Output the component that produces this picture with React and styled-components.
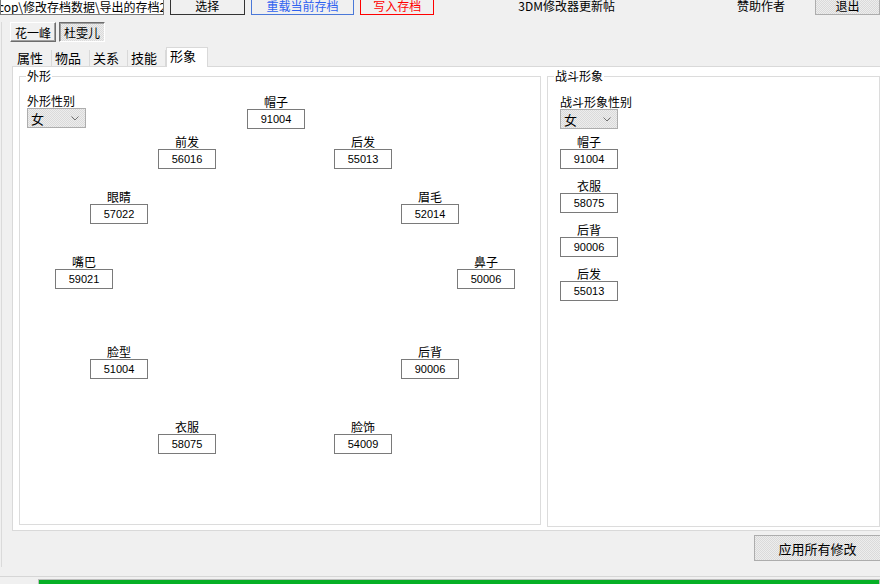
import React from 'react';
import styled, { createGlobalStyle, css } from 'styled-components';

const GlobalStyle = createGlobalStyle`
  html, body {
    margin: 0;
    padding: 0;
    background: #f0f0f0;
  }
  body {
    font-family: "Noto Sans CJK SC", "Noto Sans", sans-serif;
    font-size: 12px;
    color: #000;
  }
`;

const dither = css`
  background-color: #e4e4e4;
  background-image: repeating-conic-gradient(#dadada 0% 25%, #ededed 0% 50%);
  background-size: 2px 2px;
`;

const Window = styled.div`
  width: 880px;
  height: 584px;
  overflow: hidden;
  display: flex;
  flex-direction: column;
  background: #f0f0f0;
`;

const TopBar = styled.div`
  display: flex;
  align-items: center;
  height: 24px;
  margin-top: -9px;
  flex-shrink: 0;
`;

const PathInput = styled.div`
  box-sizing: border-box;
  width: 166px;
  height: 23px;
  border: 1px solid #7a7a7a;
  background: #fff;
  white-space: nowrap;
  overflow: hidden;
  line-height: 27px;
  font-size: 12px;
  text-indent: -3px;
`;

const TopButton = styled.div`
  box-sizing: border-box;
  width: ${p => p.$w}px;
  height: 24px;
  margin-left: ${p => p.$ml}px;
  border: 1px solid ${p => p.$border || '#333'};
  color: ${p => p.$color || '#000'};
  display: flex;
  align-items: center;
  justify-content: center;
  padding-top: 4px;
  font-size: 12px;
`;

const TopLink = styled.div`
  margin-left: ${p => p.$ml}px;
  padding-top: 4px;
  font-size: 12px;
  white-space: nowrap;
`;

const ExitButton = styled.div`
  ${dither};
  box-sizing: border-box;
  width: 66px;
  height: 24px;
  margin-left: 30px;
  border: 1px solid #adadad;
  display: flex;
  align-items: center;
  justify-content: center;
  padding-top: 4px;
`;

const Body = styled.div`
  margin-top: 7px;
  border-left: 1px solid #dadada;
  margin-left: 1px;
  height: 545px;
  display: flex;
  flex-direction: column;
  flex-shrink: 0;
`;

const CharRow = styled.div`
  display: flex;
  gap: 3px;
  padding-left: 8px;
`;

const CharButton = styled.div`
  box-sizing: border-box;
  height: 20px;
  padding: 0 4px;
  display: flex;
  align-items: center;
  font-size: 12px;
  border: 1px solid;
  ${p => p.$active
    ? css`
      ${dither};
      border-color: #6d6d6d #ffffff #ffffff #6d6d6d;
      box-shadow: inset 1px 1px 0 #a0a0a0;
    `
    : css`
      background: #f0f0f0;
      border-color: #ffffff #6d6d6d #6d6d6d #ffffff;
      box-shadow: inset -1px -1px 0 #a0a0a0;
    `}
`;

const TabStrip = styled.div`
  display: flex;
  align-items: flex-end;
  height: 19px;
  margin-top: 5px;
  padding-left: 12px;
`;

const Tab = styled.div`
  box-sizing: border-box;
  height: ${p => (p.$active ? 20 : 16)}px;
  width: ${p => p.$w}px;
  padding-left: 3px;
  font-size: 13px;
  line-height: 15px;
  margin-bottom: ${p => (p.$active ? -1 : 0)}px;
  position: relative;
  z-index: ${p => (p.$active ? 2 : 1)};
  ${p => p.$active
    ? css`
      background: #fff;
      border: 1px solid #d9d9d9;
      border-bottom: none;
    `
    : css`
      border-right: 1px solid #d9d9d9;
    `}
`;

const TabPanel = styled.div`
  box-sizing: border-box;
  margin-left: 10px;
  width: 880px;
  height: 465px;
  background: #fff;
  border: 1px solid #d9d9d9;
  padding: 9px 0 0 6px;
  display: flex;
  gap: 6px;
  align-items: flex-start;
`;

const GroupBox = styled.div`
  box-sizing: border-box;
  position: relative;
  width: ${p => p.$w}px;
  height: ${p => p.$h}px;
  border: 1px solid #dcdcdc;
  flex-shrink: 0;
`;

const Legend = styled.div`
  position: absolute;
  top: -9px;
  left: 6px;
  padding: 0 1px;
  background: #fff;
  font-size: 12px;
  line-height: 16px;
`;

const GenderLabel = styled.div`
  font-size: 12px;
  line-height: 14px;
  white-space: nowrap;
`;

const Select = styled.div`
  ${dither};
  box-sizing: border-box;
  width: ${p => p.$w}px;
  height: 20px;
  border: 1px solid #adadad;
  display: flex;
  align-items: center;
  justify-content: space-between;
  padding: 0 6px 0 3px;
  font-size: 13px;
`;

const LeftContent = styled.div`
  padding: 17px 0 0 7px;
`;

const RightContent = styled.div`
  padding: 18px 0 0 12px;
  display: flex;
  flex-direction: column;
  align-items: flex-start;
`;

const FieldList = styled.div`
  display: flex;
  flex-direction: column;
  gap: 10px;
  margin-top: 6px;
`;

const Field = styled.div`
  display: flex;
  flex-direction: column;
  align-items: center;
  width: 58px;
  ${p => p.$free && css`
    position: absolute;
    left: ${p.$x - 20}px;
    top: ${p.$y - 91}px;
  `}
`;

const FieldLabel = styled.div`
  font-size: 12px;
  line-height: 14px;
  white-space: nowrap;
`;

const ValueBox = styled.div`
  box-sizing: border-box;
  width: 58px;
  height: 20px;
  border: 1px solid #7a7a7a;
  background: #fff;
  font-family: "Liberation Sans", Arial, sans-serif;
  font-size: 11px;
  line-height: 18px;
  text-align: center;
`;

const ApplyRow = styled.div`
  display: flex;
  justify-content: flex-end;
  margin-top: 4px;
`;

const ApplyButton = styled.div`
  ${dither};
  box-sizing: border-box;
  width: 127px;
  height: 26px;
  margin-right: -1px;
  border: 1px solid #adadad;
  display: flex;
  align-items: center;
  justify-content: center;
  font-size: 13px;
`;

const Footer = styled.div`
  margin-top: 9px;
  border-top: 1px solid #d6d6d6;
  padding: 2px 0 0 38px;
  flex-shrink: 0;
`;

const Progress = styled.div`
  height: 10px;
  border: 1px solid #bcbcbc;
  background: #06b025;
`;

const Chevron = () => (
  <svg width="8" height="5" viewBox="0 0 8 5">
    <path d="M0.5 0.5 L4 4 L7.5 0.5" fill="none" stroke="#707070" strokeWidth="1" />
  </svg>
);

const looks = [
  ['帽子', '91004', 247, 109],
  ['前发', '56016', 158, 149],
  ['后发', '55013', 334, 149],
  ['眼睛', '57022', 90, 204],
  ['眉毛', '52014', 401, 204],
  ['嘴巴', '59021', 55, 269],
  ['鼻子', '50006', 457, 269],
  ['脸型', '51004', 90, 359],
  ['后背', '90006', 401, 359],
  ['衣服', '58075', 158, 434],
  ['脸饰', '54009', 334, 434],
];

const battle = [
  ['帽子', '91004'],
  ['衣服', '58075'],
  ['后背', '90006'],
  ['后发', '55013'],
];

const tabs = [
  ['属性', 38],
  ['物品', 38],
  ['关系', 38],
  ['技能', 38],
  ['形象', 42, true],
];

const App = () => (
  <Window>
    <GlobalStyle />
    <TopBar>
      <PathInput>cop\修改存档数据\导出的存档2.sav</PathInput>
      <TopButton $w={76} $ml={6}>选择</TopButton>
      <TopButton $w={105} $ml={6} $border="#4a78d8" $color="#2f62f0">重载当前存档</TopButton>
      <TopButton $w={75} $ml={6} $border="#ff0000" $color="#ff0000">写入存档</TopButton>
      <TopLink $ml={84}>3DM修改器更新帖</TopLink>
      <TopLink $ml={122}>赞助作者</TopLink>
      <ExitButton>退出</ExitButton>
    </TopBar>
    <Body>
      <CharRow>
        <CharButton>花一峰</CharButton>
        <CharButton $active>杜雯儿</CharButton>
      </CharRow>
      <TabStrip>
        {tabs.map(([name, w, active]) => (
          <Tab key={name} $w={w} $active={active}>{name}</Tab>
        ))}
      </TabStrip>
      <TabPanel>
        <GroupBox $w={522} $h={449}>
          <Legend>外形</Legend>
          <LeftContent>
            <GenderLabel>外形性别</GenderLabel>
            <Select $w={59}>女<Chevron /></Select>
          </LeftContent>
          {looks.map(([label, value, x, y]) => (
            <Field key={label} $free $x={x} $y={y}>
              <FieldLabel>{label}</FieldLabel>
              <ValueBox>{value}</ValueBox>
            </Field>
          ))}
        </GroupBox>
        <GroupBox $w={333} $h={451}>
          <Legend>战斗形象</Legend>
          <RightContent>
            <GenderLabel>战斗形象性别</GenderLabel>
            <Select $w={58}>女<Chevron /></Select>
            <FieldList>
              {battle.map(([label, value]) => (
                <Field key={label}>
                  <FieldLabel>{label}</FieldLabel>
                  <ValueBox>{value}</ValueBox>
                </Field>
              ))}
            </FieldList>
          </RightContent>
        </GroupBox>
      </TabPanel>
      <ApplyRow>
        <ApplyButton>应用所有修改</ApplyButton>
      </ApplyRow>
    </Body>
    <Footer>
      <Progress />
    </Footer>
  </Window>
);

export default App;
